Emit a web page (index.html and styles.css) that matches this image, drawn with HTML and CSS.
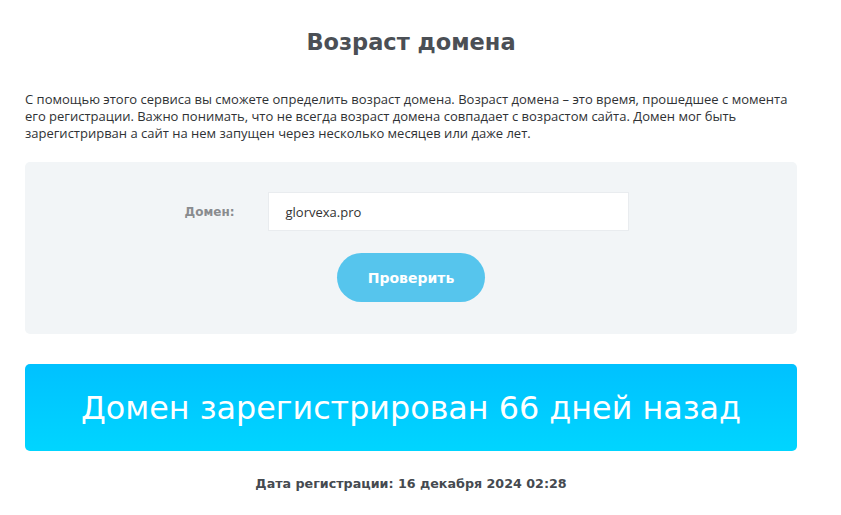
FILE: index.html
```html
<!DOCTYPE html>
<html lang="ru">
<head>
<meta charset="utf-8">
<title>Возраст домена</title>
<link rel="stylesheet" href="styles.css">
</head>
<body>
<main class="page">
  <h1 class="title">Возраст домена</h1>
  <p class="intro">С помощью этого сервиса вы сможете определить возраст домена. Возраст домена – это время, прошедшее с момента его регистрации. Важно понимать, что не всегда возраст домена совпадает с возрастом сайта. Домен мог быть зарегистрирван а сайт на нем запущен через несколько месяцев или даже лет.</p>
  <form class="check-box">
    <div class="field-row">
      <label class="field-label" for="domain">Домен:</label>
      <input class="field-input" id="domain" type="text" value="glorvexa.pro">
    </div>
    <button class="check-btn" type="button">Проверить</button>
  </form>
  <div class="result">Домен зарегистрирован 66 дней назад</div>
  <p class="reg-date">Дата регистрации: 16 декабря 2024 02:28</p>
</main>
</body>
</html>
```

FILE: styles.css
```css
* { box-sizing: border-box; }
html, body { margin: 0; padding: 0; background: #fff; }
body { font-family: "Open Sans", "Noto Sans", sans-serif; color: #333; }
.page {
  width: 772px;
  margin-left: 25px;
  padding-top: 27px;
  display: flex;
  flex-direction: column;
}
.title {
  margin: 0;
  text-align: center;
  font-family: "DejaVu Sans", sans-serif;
  font-weight: 700;
  font-size: 22.5px;
  line-height: 30px;
  color: #4b4f55;
}
.intro {
  margin: 34px 0 0;
  font-size: 13px;
  line-height: 17px;
  color: #2f3235;
}
.check-box {
  margin-top: 20px;
  background: #f2f5f7;
  border-radius: 5px;
  height: 172px;
  padding-top: 30px;
  display: flex;
  flex-direction: column;
  align-items: center;
}
.field-row {
  display: flex;
  align-items: center;
  margin-right: 8px;
}
.field-label {
  font-family: "DejaVu Sans", sans-serif;
  font-weight: 700;
  font-size: 12px;
  color: #8a8c8f;
  margin-right: 34px;
}
.field-input {
  width: 361px;
  height: 39px;
  border: 1px solid #e9ecef;
  background: #fff;
  padding: 0 16px;
  font-family: "Open Sans", sans-serif;
  font-size: 13px;
  color: #333;
  outline: none;
}
.check-btn {
  margin-top: 22px;
  width: 148px;
  height: 49px;
  border: 0;
  border-radius: 25px;
  background: #56c5ed;
  color: #fff;
  font-family: "DejaVu Sans", sans-serif;
  font-weight: 700;
  font-size: 14px;
}
.result {
  margin-top: 30px;
  height: 87px;
  border-radius: 5px;
  background: linear-gradient(#00c1ff, #00d5ff);
  color: #fff;
  font-family: "DejaVu Sans", sans-serif;
  font-weight: 400;
  font-size: 31.8px;
  display: flex;
  align-items: center;
  justify-content: center;
}
.reg-date {
  margin: 25px 0 0;
  text-align: center;
  font-family: "DejaVu Sans", sans-serif;
  font-weight: 700;
  font-size: 12.7px;
  color: #454a50;
}
```
